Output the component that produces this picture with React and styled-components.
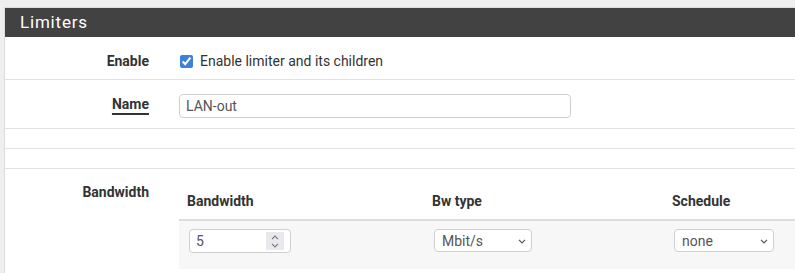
import React from "react";
import styled, { createGlobalStyle } from "styled-components";

const GlobalStyle = createGlobalStyle`
  body {
    margin: 0;
    background: #efefef;
    font-family: Roboto, "Liberation Sans", sans-serif;
    overflow: hidden;
  }
`;

const Page = styled.div`
  padding: 7px 0 0 4px;
  overflow: hidden;
  height: 266px;
`;

const Panel = styled.div`
  width: 840px;
  background: #fff;
  border: 1px solid #dcdcdc;
`;

const Heading = styled.h2`
  margin: 0;
  height: 29px;
  line-height: 29px;
  padding-left: 15px;
  background: #424242;
  color: #fff;
  font-size: 17px;
  font-weight: 400;
  letter-spacing: 0.8px;
`;

const Row = styled.div`
  display: flex;
  align-items: flex-start;
  padding: ${(p) => (p.$empty ? "0" : `14px 0 ${p.$bottom || 0}px`)};
  height: ${(p) => (p.$empty ? "19px" : "auto")};
  border-bottom: ${(p) => (p.$last ? "none" : "1px solid #e2e2e2")};
`;

const Label = styled.div`
  width: 144px;
  margin-right: 30px;
  flex-shrink: 0;
  text-align: right;
  font-size: 14px;
  line-height: 20px;
  font-weight: 700;
  color: #333;
  margin-top: ${(p) => p.$shift || 0}px;

  span {
    text-decoration: underline;
    text-decoration-thickness: 2px;
    text-underline-offset: 4px;
  }
`;

const CheckLabel = styled.label`
  display: flex;
  align-items: center;
  gap: 7px;
  font-size: 14px;
  line-height: 20px;
  color: #333;

  input {
    width: 13px;
    height: 13px;
    margin: 0 0 0 1px;
    accent-color: #3b7fdf;
  }
`;

const TextInput = styled.input`
  box-sizing: border-box;
  width: 392px;
  height: 24px;
  padding: 0 6px;
  border: 1px solid #cfcfcf;
  border-radius: 4px;
  font-family: inherit;
  font-size: 14px;
  color: #555;
  outline: none;
`;

const Table = styled.table`
  border-collapse: collapse;
  width: 660px;
  font-size: 14px;

  th {
    text-align: left;
    padding: 8px;
    line-height: 20px;
    font-weight: 700;
    color: #333;
    border-bottom: 2px solid #dddddd;
  }

  td {
    background: #f7f7f7;
    padding: 8px 10px 16px;
    vertical-align: top;
  }
`;

const NumberBox = styled.div`
  box-sizing: border-box;
  display: flex;
  align-items: center;
  width: 102px;
  height: 24px;
  padding: 0 6px;
  border: 1px solid #cfcfcf;
  border-radius: 4px;
  background: #fff;

  input {
    flex: 1;
    min-width: 0;
    border: none;
    padding: 0;
    font-family: inherit;
    font-size: 14px;
    color: #555;
    outline: none;
    background: transparent;
  }
`;

const Spinner = styled.span`
  display: flex;
  flex-direction: column;
  align-items: center;
  justify-content: center;
  gap: 3px;
  width: 18px;
  height: 18px;
  background: #e9e9ed;
`;

const SelectWrap = styled.div`
  position: relative;
  width: ${(p) => p.$w}px;

  svg {
    position: absolute;
    right: 6px;
    top: 10px;
    pointer-events: none;
  }
`;

const Select = styled.select`
  box-sizing: border-box;
  appearance: none;
  display: block;
  width: 100%;
  height: 23px;
  padding: 0 20px 0 7px;
  border: 1px solid #cfcfcf;
  border-radius: 4px;
  background: #fff;
  font-family: inherit;
  font-size: 14px;
  color: #555;
  outline: none;
`;

const Chevron = ({ up, color = "#7a7a7a" }) => (
  <svg width="8" height="5" viewBox="0 0 8 5">
    <path
      d={up ? "M1 4.2 L4 1.2 L7 4.2" : "M1 0.8 L4 3.8 L7 0.8"}
      fill="none"
      stroke={color}
      strokeWidth="1.2"
    />
  </svg>
);

export default function App() {
  return (
    <>
      <GlobalStyle />
      <Page>
        <Panel>
          <Heading>Limiters</Heading>
          <Row $bottom={8}>
            <Label>Enable</Label>
            <CheckLabel>
              <input type="checkbox" defaultChecked />
              Enable limiter and its children
            </CheckLabel>
          </Row>
          <Row $bottom={10}>
            <Label>
              <span>Name</span>
            </Label>
            <TextInput defaultValue="LAN-out" />
          </Row>
          <Row $empty />
          <Row $empty />
          <Row $last $bottom={20}>
            <Label $shift={-1}>Bandwidth</Label>
            <Table>
              <thead>
                <tr>
                  <th style={{ width: 229 }}>Bandwidth</th>
                  <th style={{ width: 224 }}>Bw type</th>
                  <th>Schedule</th>
                </tr>
              </thead>
              <tbody>
                <tr>
                  <td>
                    <NumberBox>
                      <input defaultValue="5" />
                      <Spinner>
                        <Chevron up />
                        <Chevron />
                      </Spinner>
                    </NumberBox>
                  </td>
                  <td>
                    <SelectWrap $w={98}>
                      <Select defaultValue="Mbit/s">
                        <option>Mbit/s</option>
                        <option>Kbit/s</option>
                        <option>Bit/s</option>
                      </Select>
                      <Chevron color="#555" />
                    </SelectWrap>
                  </td>
                  <td>
                    <SelectWrap $w={100}>
                      <Select defaultValue="none">
                        <option>none</option>
                      </Select>
                      <Chevron color="#555" />
                    </SelectWrap>
                  </td>
                </tr>
              </tbody>
            </Table>
          </Row>
        </Panel>
      </Page>
    </>
  );
}
